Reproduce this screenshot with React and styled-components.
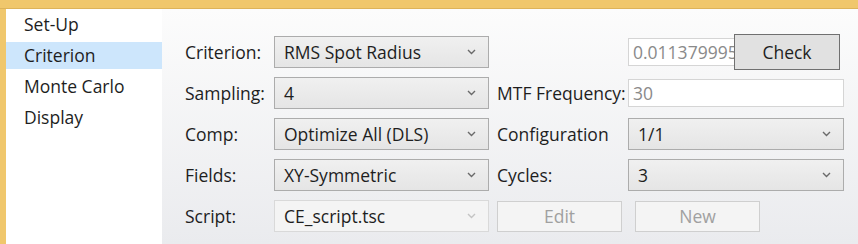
import React from "react";
import styled, { createGlobalStyle } from "styled-components";

const Global = createGlobalStyle`
  html, body { margin: 0; padding: 0; background: #fff; }
  body { font-family: "Open Sans", "Noto Sans", sans-serif; font-size: 17.5px; color: #1e1e1e; }
  * { box-sizing: border-box; }
`;

const Frame = styled.div`
  width: 858px;
  height: 244px;
  display: flex;
  flex-direction: column;
  background: #f0c76c;
  overflow: hidden;
`;

const TopBand = styled.div`
  height: 9px;
  flex: none;
  border-bottom: 1px solid #ddb35a;
`;

const Body = styled.div`
  flex: 1;
  display: flex;
  margin-left: 6px;
  min-height: 0;
`;

const Sidebar = styled.nav`
  width: 156px;
  flex: none;
  background: #fff;
  padding-top: 2px;
  display: flex;
  flex-direction: column;
  gap: 4px;
`;

const NavItem = styled.div`
  height: 27px;
  line-height: 27px;
  padding-left: 18px;
  font-size: 17.5px;
  background: ${(p) => (p.$active ? "#cde6fc" : "transparent")};
`;

const Main = styled.main`
  flex: 1;
  background: linear-gradient(#fcfcfc, #eaebee);
  padding: 27px 0 0 23px;
`;

const Grid = styled.div`
  display: grid;
  grid-template-columns: 89px 215px 139px 216px;
  row-gap: 9px;
  grid-auto-rows: 32px;
  align-items: center;
  & > :nth-child(4n + 3) { margin-left: 8px; }
`;

const Label = styled.div`
  font-size: 17.5px;
  white-space: nowrap;
`;

const SelectBox = styled.div`
  height: 32px;
  display: flex;
  align-items: center;
  justify-content: space-between;
  padding: 0 12px 0 9px;
  border: 1px solid ${(p) => (p.$disabled ? "#d9d9d9" : "#acacac")};
  background: ${(p) =>
    p.$disabled ? "#f4f4f4" : "linear-gradient(#f0f0f0, #e5e5e5)"};
  font-size: 17.5px;
  color: #1e1e1e;
  white-space: nowrap;
`;

const Chevron = ({ light }) => (
  <svg width="9" height="6" viewBox="0 0 9 6">
    <path
      d="M1 1 L4.5 4.5 L8 1"
      fill="none"
      stroke={light ? "#c4c4c4" : "#6a6a6a"}
      strokeWidth="1.4"
    />
  </svg>
);

const Select = ({ value, disabled }) => (
  <SelectBox $disabled={disabled}>
    <span>{value}</span>
    <Chevron light={disabled} />
  </SelectBox>
);

const TextBox = styled.div`
  height: 28px;
  width: ${(p) => p.$w || "100%"};
  border: 1px solid #d5d5d5;
  background: #fff;
  color: #8a8a8a;
  font-size: 17.5px;
  line-height: 26px;
  padding-left: 4px;
  overflow: hidden;
  white-space: nowrap;
  flex: none;
`;

const CellRow = styled.div`
  display: flex;
  align-items: center;
  gap: ${(p) => p.$gap || 0}px;
  grid-column: ${(p) => p.$span || "auto"};
`;

const Button = styled.div`
  width: ${(p) => p.$w}px;
  height: ${(p) => p.$h}px;
  flex: none;
  display: flex;
  align-items: center;
  justify-content: center;
  font-size: 17.5px;
  border: 1px solid ${(p) => (p.$disabled ? "#cfcfcf" : "#707070")};
  background: ${(p) => (p.$disabled ? "#f4f4f4" : "#e1e1e1")};
  color: ${(p) => (p.$disabled ? "#a0a0a0" : "#1e1e1e")};
  margin-left: ${(p) => p.$ml || 0}px;
  position: relative;
`;

export default function App() {
  return (
    <>
      <Global />
      <Frame>
        <TopBand />
        <Body>
          <Sidebar>
            <NavItem>Set-Up</NavItem>
            <NavItem $active>Criterion</NavItem>
            <NavItem>Monte Carlo</NavItem>
            <NavItem>Display</NavItem>
          </Sidebar>
          <Main>
            <Grid>
              <Label>Criterion:</Label>
              <Select value="RMS Spot Radius" />
              <div />
              <CellRow>
                <TextBox $w="107px">0.011379995</TextBox>
                <Button $w={106} $h={36} $ml={-1}>Check</Button>
              </CellRow>

              <Label>Sampling:</Label>
              <Select value="4" />
              <Label>MTF Frequency:</Label>
              <TextBox>30</TextBox>

              <Label>Comp:</Label>
              <Select value="Optimize All (DLS)" />
              <Label>Configuration</Label>
              <Select value="1/1" />

              <Label>Fields:</Label>
              <Select value="XY-Symmetric" />
              <Label>Cycles:</Label>
              <Select value="3" />

              <Label>Script:</Label>
              <Select value="CE_script.tsc" disabled />
              <CellRow $span="3 / 5" $gap={13}>
                <Button $w={125} $h={31} $disabled>Edit</Button>
                <Button $w={125} $h={31} $disabled>New</Button>
              </CellRow>
            </Grid>
          </Main>
        </Body>
      </Frame>
    </>
  );
}
